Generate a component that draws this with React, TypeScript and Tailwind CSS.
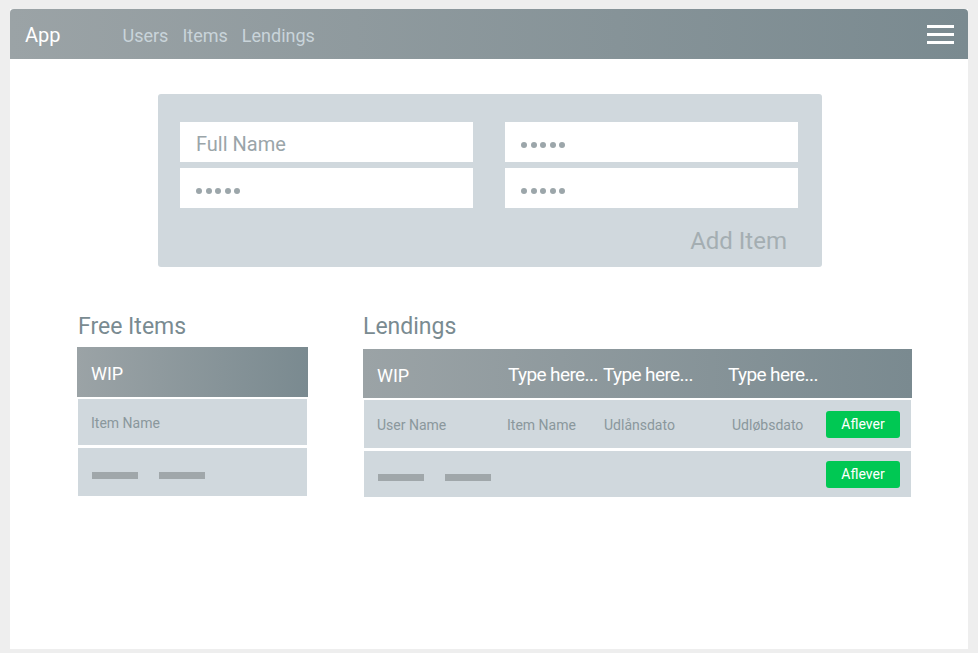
import React from 'react'

const font = { fontFamily: 'Roboto, "Noto Sans", sans-serif' }

function Dots() {
  return (
    <div className="mt-[5px] flex gap-[3.5px]">
      {[0, 1, 2, 3, 4].map((i) => (
        <span key={i} className="h-[6px] w-[6px] rounded-full bg-[#9ca6aa]" />
      ))}
    </div>
  )
}

function Field({ children }: { children: React.ReactNode }) {
  return <div className="flex h-[40px] w-[293px] items-center bg-white pl-[16px]">{children}</div>
}

function Bars() {
  return (
    <div className="mt-[6px] flex gap-[21px]">
      <span className="h-[7px] w-[46px] bg-[#a0a7aa]" />
      <span className="h-[7px] w-[46px] bg-[#a0a7aa]" />
    </div>
  )
}

function Aflever() {
  return (
    <button className="ml-auto mr-[11px] h-[27px] w-[74px] rounded-[3px] bg-[#00c853] text-[14px] text-white">
      Aflever
    </button>
  )
}

export default function App() {
  return (
    <div className="min-h-[653px] bg-[#eeeeee] pt-[9px]" style={font}>
      <div className="mx-[10px] h-[640px] bg-white">
        <nav className="flex h-[50px] items-center rounded-t-[4px] bg-gradient-to-r from-[#9ba3a6] to-[#7a8a90] pl-[15px] pr-[14px]">
          <span className="pt-[2px] text-[20px] text-white">App</span>
          <div className="ml-[62px] flex gap-[14px] pt-[2px] text-[18px] text-[#c9d4da]">
            <span>Users</span>
            <span>Items</span>
            <span>Lendings</span>
          </div>
          <div className="ml-auto flex w-[27px] flex-col gap-[5px]">
            <span className="h-[3px] bg-white" />
            <span className="h-[3px] bg-white" />
            <span className="h-[3px] bg-white" />
          </div>
        </nav>

        <div className="ml-[148px] mt-[35px] flex h-[173px] w-[664px] flex-col rounded-[3px] bg-[#d0d8dd] pl-[22px] pr-[24px] pt-[28px]">
          <div className="grid grid-cols-[293px_293px] justify-between gap-y-[6px]">
            <Field>
              <span className="pt-[3px] text-[20px] text-[#9aa5a9]">Full Name</span>
            </Field>
            <Field>
              <Dots />
            </Field>
            <Field>
              <Dots />
            </Field>
            <Field>
              <Dots />
            </Field>
          </div>
          <div className="mt-[19px] self-end pr-[11px] text-[24px] leading-[28px] text-[#a4aeb2]">Add Item</div>
        </div>

        <div className="mt-[46px] flex gap-[55px] pl-[67px]">
          <section className="w-[231px]">
            <h2 className="mb-[6px] pl-[1px] text-[23px] leading-[28px] text-[#7a8b91]">Free Items</h2>
            <div className="flex h-[50px] items-center bg-gradient-to-r from-[#9ba3a6] to-[#7a8a90] pl-[14px] pt-[3px] text-[18px] text-white">
              WIP
            </div>
            <div className="mx-[1px] mt-[2px] flex h-[46px] items-center bg-[#d0d8dd] pl-[13px] pt-[2px] text-[14px] text-[#8a979c]">
              Item Name
            </div>
            <div className="mx-[1px] mt-[3px] flex h-[48px] items-center bg-[#d0d8dd] pl-[14px]">
              <Bars />
            </div>
          </section>

          <section className="w-[549px]">
            <h2 className="mb-[8px] text-[23px] leading-[28px] text-[#7a8b91]">Lendings</h2>
            <div className="flex h-[49px] items-center bg-gradient-to-r from-[#9ba3a6] to-[#7a8a90] pl-[14px] pt-[3px] text-white">
              <span className="w-[131px] text-[18px]">WIP</span>
              <span className="w-[95px] text-[19px] tracking-[-0.6px]">Type here...</span>
              <span className="w-[125px] text-[19px] tracking-[-0.6px]">Type here...</span>
              <span className="text-[19px] tracking-[-0.6px]">Type here...</span>
            </div>
            <div className="mx-[1px] mt-[2px] flex h-[48px] items-center bg-[#d0d8dd] pl-[13px] text-[14px] text-[#8a979c]">
              <span className="w-[130px] pt-[2px]">User Name</span>
              <span className="w-[97px] pt-[2px]">Item Name</span>
              <span className="w-[128px] pt-[2px]">Udlånsdato</span>
              <span className="pt-[2px]">Udløbsdato</span>
              <Aflever />
            </div>
            <div className="mx-[1px] mt-[3px] flex h-[46px] items-center bg-[#d0d8dd] pl-[14px]">
              <Bars />
              <Aflever />
            </div>
          </section>
        </div>
      </div>
    </div>
  )
}
